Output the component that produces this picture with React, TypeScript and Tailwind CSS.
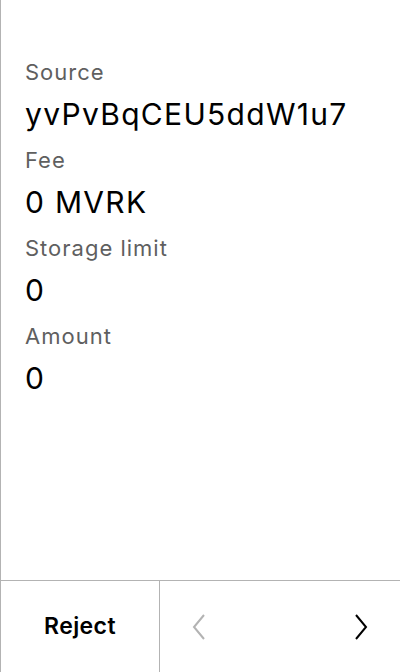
import React from "react";

const rows: [string, string][] = [
  ["Source", "yvPvBqCEU5ddW1u7"],
  ["Fee", "0 MVRK"],
  ["Storage limit", "0"],
  ["Amount", "0"],
];

export default function App() {
  return (
    <div
      className="w-[400px] h-[672px] bg-white border-l border-[#b3b3b3] flex flex-col"
      style={{ fontFamily: "Inter, 'Noto Sans', sans-serif" }}
    >
      <div className="flex-1 pt-[50px] pl-[24px]">
        {rows.map(([label, value]) => (
          <div key={label}>
            <div className="h-[44px] leading-[44px] text-[22px] tracking-[1px] text-[#5f5f5f]">{label}</div>
            <div className="h-[44px] leading-[40px] text-[30px] tracking-[1.3px] text-black">{value}</div>
          </div>
        ))}
      </div>
      <div className="h-[92px] border-t border-[#b3b3b3] flex">
        <div className="w-[159px] flex items-center justify-center border-r border-[#b3b3b3]">
          <span className="text-[23px] tracking-[0.4px] font-semibold text-black">Reject</span>
        </div>
        <div className="flex-1 flex items-center justify-between pl-[31px] pr-[31px]">
          <svg width="16" height="26" viewBox="0 0 16 26" fill="none">
            <path d="M13 1 L3 13 L13 25" stroke="#b3b3b3" strokeWidth="2" />
          </svg>
          <svg width="16" height="26" viewBox="0 0 16 26" fill="none">
            <path d="M3 1 L13 13 L3 25" stroke="#000" strokeWidth="2" />
          </svg>
        </div>
      </div>
    </div>
  );
}
